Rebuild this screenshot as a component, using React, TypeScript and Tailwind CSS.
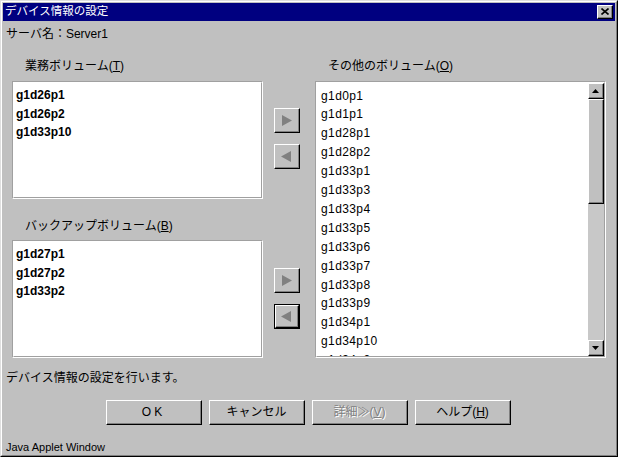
import React from "react";

const ui = "[font-family:'Liberation_Sans','Noto_Sans_CJK_JP',sans-serif]";

function Raised({
  className = "",
  children,
}: {
  className?: string;
  children?: React.ReactNode;
}) {
  return (
    <div
      className={`border border-t-white border-l-white border-r-black border-b-black bg-[#c0c0c0] ${className}`}
    >
      <div className="flex h-full w-full items-center justify-center border-r border-b border-r-[#808080] border-b-[#808080]">
        {children}
      </div>
    </div>
  );
}

function Arrow({ dir, focused = false }: { dir: "right" | "left"; focused?: boolean }) {
  const tri =
    dir === "right" ? (
      <svg width="11" height="11" viewBox="0 0 11 11">
        <polygon points="1,0 11,5.5 1,11" fill="#808080" />
      </svg>
    ) : (
      <svg width="11" height="11" viewBox="0 0 11 11">
        <polygon points="10,0 10,11 0,5.5" fill="#808080" />
      </svg>
    );
  if (focused) {
    return (
      <div className="h-[25px] w-[26px] border border-black">
        <Raised className="h-full w-full">{tri}</Raised>
      </div>
    );
  }
  return <Raised className="h-[25px] w-[26px]">{tri}</Raised>;
}

function ListBox({
  items,
  bold = false,
  className = "",
  scroll = false,
}: {
  items: string[];
  bold?: boolean;
  className?: string;
  scroll?: boolean;
}) {
  return (
    <div
      className={`border border-t-[#a0a0a0] border-l-[#a0a0a0] border-r-white border-b-white ${className}`}
    >
      <div className="flex h-full border border-t-white border-l-white border-r-[#a0a0a0] border-b-[#a0a0a0] bg-white">
        <div
          className={`flex-1 overflow-hidden ${bold ? "pt-[3px] pl-[2px] font-bold leading-[18.6px]" : "pt-[3.5px] pl-[4px] tracking-[0.4px] leading-[18.9px]"} text-[12px] text-black`}
        >
          {items.map((it) => (
            <div key={it}>{it}</div>
          ))}
        </div>
        {scroll && (
          <div className="flex w-[16px] flex-col bg-[#c0c0c0]">
            <Raised className="h-[16px] w-[16px]">
              <svg width="7" height="4" viewBox="0 0 7 4">
                <polygon points="3.5,0 7,4 0,4" fill="#000" />
              </svg>
            </Raised>
            <Raised className="h-[105px] w-[16px]" />
            <div className="flex-1 bg-[#c8c8c8]" />
            <Raised className="h-[16px] w-[16px]">
              <svg width="7" height="4" viewBox="0 0 7 4">
                <polygon points="0,0 7,0 3.5,4" fill="#000" />
              </svg>
            </Raised>
          </div>
        )}
      </div>
    </div>
  );
}

function DialogButton({
  children,
  disabled = false,
}: {
  children: React.ReactNode;
  disabled?: boolean;
}) {
  return (
    <Raised className="h-[25px] w-[96px]">
      <span
        className={`text-[12px] leading-none ${disabled ? "text-[#808080] [text-shadow:1px_1px_0_#fff]" : "text-black"}`}
      >
        {children}
      </span>
    </Raised>
  );
}

const others = [
  "g1d0p1",
  "g1d1p1",
  "g1d28p1",
  "g1d28p2",
  "g1d33p1",
  "g1d33p3",
  "g1d33p4",
  "g1d33p5",
  "g1d33p6",
  "g1d33p7",
  "g1d33p8",
  "g1d33p9",
  "g1d34p1",
  "g1d34p10",
  "g1d34p2",
];

export default function App() {
  return (
    <div
      className={`h-[457px] w-[618px] overflow-hidden border border-t-[#dfdfdf] border-l-[#dfdfdf] border-r-black border-b-black bg-[#c0c0c0] ${ui}`}
    >
      <div className="flex h-full flex-col border border-t-white border-l-white border-r-[#808080] border-b-[#808080] p-px">
        {/* title bar */}
        <div className="flex h-[18px] items-center justify-between bg-[#000080] pr-[2px] pl-[2px]">
          <span className="text-[11.5px] leading-none text-white">デバイス情報の設定</span>
          <Raised className="h-[14px] w-[16px]">
            <svg width="8" height="7" viewBox="0 0 8 7">
              <path d="M0.5 0.5 L7.5 6.5 M7.5 0.5 L0.5 6.5" stroke="#000" strokeWidth="1.6" />
            </svg>
          </Raised>
        </div>

        <div className="mt-[5px] pl-[3px] text-[12px] leading-[16px] text-black">
          サーバ名：Server1
        </div>

        <div className="mt-[16px] flex pl-[9px]">
          <div className="flex w-[251px] flex-col">
            <div className="h-[23px] pl-[13px] text-[12px] leading-[16px]">
              業務ボリューム(<u>T</u>)
            </div>
            <ListBox className="h-[118px]" bold items={["g1d26p1", "g1d26p2", "g1d33p10"]} />
            <div className="mt-[19px] h-[22px] pl-[13px] text-[12px] leading-[16px]">
              バックアップボリューム(<u>B</u>)
            </div>
            <ListBox className="h-[118px]" bold items={["g1d27p1", "g1d27p2", "g1d33p2"]} />
          </div>

          <div className="ml-[11px] flex w-[26px] flex-col">
            <div className="mt-[50px]">
              <Arrow dir="right" />
            </div>
            <div className="mt-[11px]">
              <Arrow dir="left" />
            </div>
            <div className="mt-[99px]">
              <Arrow dir="right" />
            </div>
            <div className="mt-[11px]">
              <Arrow dir="left" focused />
            </div>
          </div>

          <div className="ml-[15px] flex w-[291px] flex-col">
            <div className="h-[23px] pl-[13px] text-[12px] leading-[16px]">
              その他のボリューム(<u>O</u>)
            </div>
            <ListBox className="h-[277px]" scroll items={others} />
          </div>
        </div>

        <div className="mt-[12px] pl-[3px] text-[12px] leading-[16px] text-black">
          デバイス情報の設定を行います。
        </div>

        <div className="mt-[14px] flex gap-[7px] pl-[103px]">
          <DialogButton>
            <span className="tracking-[3px]">OK</span>
          </DialogButton>
          <DialogButton>キャンセル</DialogButton>
          <DialogButton disabled>
            詳細≫(<u>V</u>)
          </DialogButton>
          <DialogButton>
            ヘルプ(<u>H</u>)
          </DialogButton>
        </div>

        <div className="mt-[15px] pl-[3px] text-[11px] leading-[14px] text-black">
          Java Applet Window
        </div>
      </div>
    </div>
  );
}
